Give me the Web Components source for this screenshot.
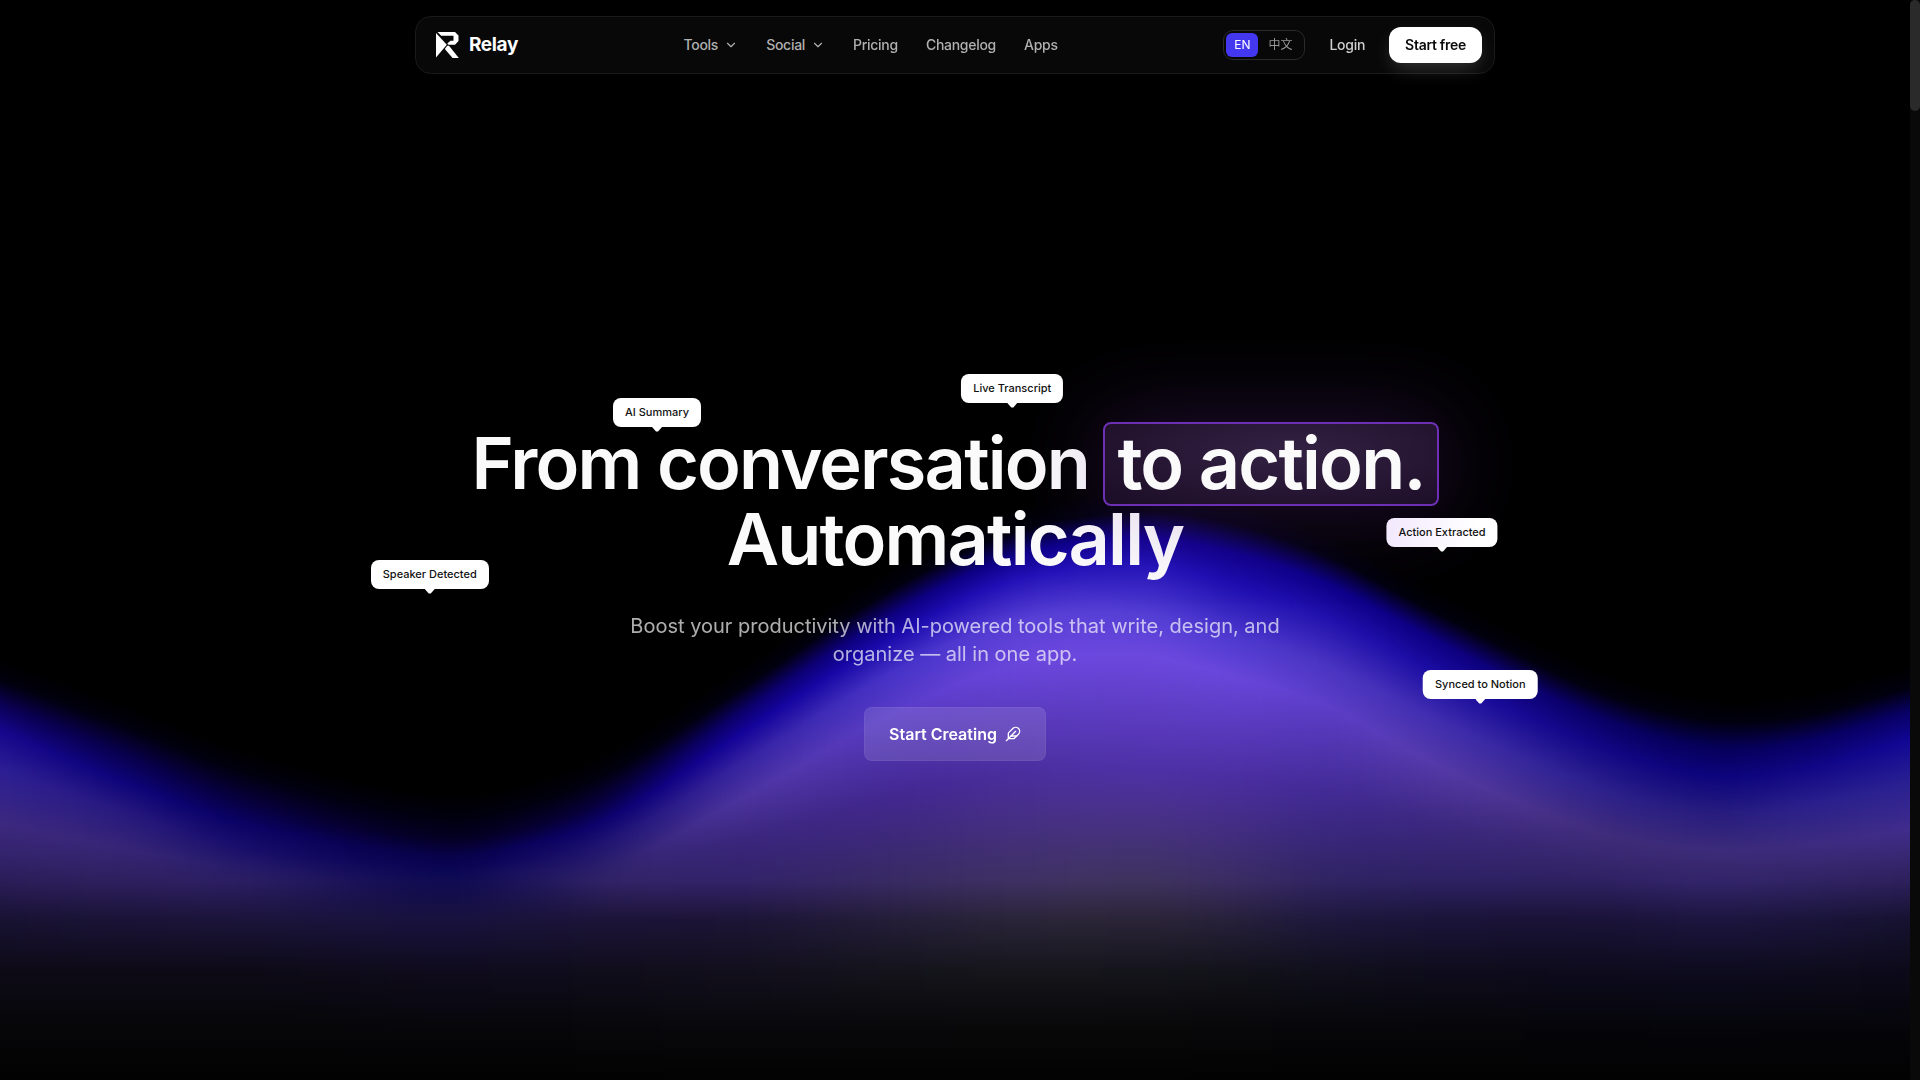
<!DOCTYPE html>
<html lang="en">
<head>
<meta charset="utf-8">
<meta name="viewport" content="width=device-width, initial-scale=1">
<title>Relay</title>
<style>
  html, body { margin: 0; background: #000; }
  body { font-family: Inter, "Noto Sans CJK SC", sans-serif; color: #fafafa; }
</style>
</head>
<body>
<relay-page>
  <relay-header slot="header">
    <relay-logo slot="brand">Relay</relay-logo>
    <nav-item menu>Tools</nav-item>
    <nav-item menu>Social</nav-item>
    <nav-item href="#pricing">Pricing</nav-item>
    <nav-item href="#changelog">Changelog</nav-item>
    <nav-item href="#apps">Apps</nav-item>
    <language-switch slot="actions"></language-switch>
    <nav-item slot="actions" href="#login" bright>Login</nav-item>
    <start-button slot="actions">Start free</start-button>
  </relay-header>
  <relay-hero>
    <span slot="lead">From conversation</span>
    <span slot="mark">to action.</span>
    <span slot="tail">Automatically</span>
    <span slot="text">Boost your productivity with AI-powered tools that write, design, and organize — all in one app.</span>
    <span slot="cta">Start Creating</span>
    <float-tag slot="tags" style="--x:34.4%;--y:398px">AI Summary</float-tag>
    <float-tag slot="tags" style="--x:53%;--y:374px">Live Transcript</float-tag>
    <float-tag slot="tags" style="--x:22.5%;--y:560px">Speaker Detected</float-tag>
    <float-tag slot="tags" tinted style="--x:75.5%;--y:518px">Action Extracted</float-tag>
    <float-tag slot="tags" style="--x:77.5%;--y:670px">Synced to Notion</float-tag>
  </relay-hero>
</relay-page>

<script>
class Base extends HTMLElement {
  constructor() {
    super();
    this.attachShadow({ mode: 'open' }).innerHTML = this.template();
  }
}

customElements.define('relay-page', class extends Base {
  template() { return `<style>
    :host { display: grid; grid-template-columns: 1fr 10px; min-height: 100vh; }
    main { position: relative; display: flex; flex-direction: column; overflow: hidden; }
    .rail { background: #090909; }
    .thumb { height: 111px; border-radius: 5px; background: #2a2a2a; }
    slot[name=header] { display: block; }
    .top { position: absolute; inset: 0 0 auto; z-index: 2; padding: 16px 24px 0; }
  </style>
  <main><div class="top"><slot name="header"></slot></div><slot></slot></main>
  <div class="rail" aria-hidden="true"><div class="thumb"></div></div>`; }
});

customElements.define('relay-header', class extends Base {
  template() { return `<style>
    :host { display: block; max-width: 1080px; margin: 0 auto; }
    header { box-sizing: border-box; height: 58px; padding: 0 12px 0 20px; display: flex; align-items: center;
      justify-content: space-between; border: 1px solid #1a1a1a; border-radius: 16px; background: #080808; }
    nav { display: flex; gap: 28px; }
    .actions { display: flex; align-items: center; gap: 24px; }
  </style>
  <header><slot name="brand"></slot><nav aria-label="Main"><slot></slot></nav>
  <div class="actions"><slot name="actions"></slot></div></header>`; }
});

customElements.define('relay-logo', class extends Base {
  template() { return `<style>
    :host { display: block; }
    a { display: flex; align-items: center; gap: 10px; color: #fff; text-decoration: none; font-size: 19px; font-weight: 700; line-height: 28px; letter-spacing: -0.02em; }
    svg { display: block; }
  </style>
  <a href="#home"><svg width="23" height="26" viewBox="0 0 23 26" fill="#fff" aria-hidden="true">
    <path d="M0 1 10.800 12.800 0 25.500z"/>
    <path d="M1.500 0H19L22.500 3.500V9L19 12.800H12.500L11.300 11.500 14.500 8.800H17.500V3.800H5.200z"/>
    <path d="M11.300 13.800H13L22.800 26H16.600L8.800 17z"/></svg><slot></slot></a>`; }
});

customElements.define('nav-item', class extends Base {
  template() {
    const chevron = `<svg width="14" height="14" viewBox="0 0 24 24" fill="none" stroke="currentColor" stroke-width="2" stroke-linecap="round" stroke-linejoin="round" aria-hidden="true"><path d="m6 9 6 6 6-6"/></svg>`;
    const body = this.hasAttribute('menu')
      ? `<button type="button" aria-haspopup="true"><slot></slot>${chevron}</button>`
      : `<a href="${this.getAttribute('href')}"><slot></slot></a>`;
    return `<style>
      :host { display: block; }
      a, button { display: flex; align-items: center; gap: 6px; margin: 0; padding: 0; border: 0; background: none;
        font: 500 14px/20px Inter, sans-serif; letter-spacing: -0.02em; color: #b0b0b0; text-decoration: none; cursor: pointer; }
      :host([bright]) a { color: #cfcfcf; }
    </style>${body}`;
  }
});

customElements.define('language-switch', class extends Base {
  template() { return `<style>
    :host { display: block; }
    div { display: flex; padding: 2px; border: 1px solid #2a2a2a; border-radius: 10px; }
    button { margin: 0; border: 0; padding: 0 8px; height: 24px; border-radius: 6px; background: none; color: #999;
      font: 400 12px/24px Inter, "Noto Sans CJK SC", sans-serif; }
    button[aria-pressed=true] { background: #4338f0; color: #fff; }
    button + button { padding: 0 10px; }
  </style>
  <div role="group" aria-label="Language"><button type="button" aria-pressed="true">EN</button><button type="button" aria-pressed="false" lang="zh">中文</button></div>`; }
});

customElements.define('start-button', class extends Base {
  template() { return `<style>
    :host { display: block; }
    button { margin: 0; border: 0; height: 36px; padding: 0 16px; border-radius: 12px; background: #fff; color: #0a0a0a;
      font: 600 14px/20px Inter, sans-serif; letter-spacing: -0.02em; box-shadow: 0 8px 20px -4px rgba(255,255,255,.2); }
  </style><button type="button"><slot></slot></button>`; }
});

customElements.define('float-tag', class extends Base {
  template() { return `<style>
    :host { position: absolute; left: var(--x); top: var(--y); transform: translateX(-50%); display: block;
      padding: 6px 12px 7px; border-radius: 8px; background: #fff; color: #111; font-size: 11px; font-weight: 500; line-height: 16px; white-space: nowrap; }
    :host([tinted]) { background: linear-gradient(100deg, #f3e8fd, #fff 80%); }
    :host::after { content: ""; position: absolute; left: 50%; bottom: -5px; width: 10px; height: 5px; margin-left: -5px;
      background: #fff; clip-path: polygon(0 0, 100% 0, 60% 90%, 40% 90%); }
  </style><slot></slot>`; }
});

/* Colour ramps of the wave. Each entry is a column at x; its stops run from the
   dark crest to the purple body as [y, r, g, b]. The floor rows are shared. */
const FLOOR_Y = [881, 920, 972, 1029, 1080];
const WAVE = [
  [0,    [[680,0,0,0],[704,10,0,84],[730,22,6,140],[770,44,30,148],[824,60,40,126]], [[42,29,88],[24,18,50],[13,10,22],[6,6,8],[2,2,2]]],
  [120,  [[724,0,0,0],[752,8,0,76],[780,14,4,122],[810,38,24,126],[848,54,37,118]], [[45,31,94],[26,19,54],[13,10,22],[6,6,8],[2,2,2]]],
  [245,  [[772,0,0,0],[800,6,0,60],[824,11,2,100],[848,24,14,106],[868,38,26,104]], [[42,29,98],[27,20,58],[13,10,22],[6,6,8],[2,2,2]]],
  [440,  [[816,0,0,0],[838,4,0,36],[856,8,2,74],[866,10,4,82],[874,13,8,84]], [[16,11,82],[24,18,62],[15,11,28],[6,6,9],[2,2,2]]],
  [530,  [[803,0,0,0],[827,5,0,48],[844,10,2,92],[858,18,9,96],[870,27,18,97]], [[30,21,92],[26,19,58],[15,12,28],[6,6,9],[2,2,2]]],
  [612,  [[770,0,0,0],[796,7,0,66],[816,13,2,112],[838,32,20,116],[864,46,32,110]], [[48,34,102],[28,20,56],[16,13,27],[7,7,10],[2,2,2]]],
  [735,  [[692,0,0,0],[716,11,0,104],[737,20,3,152],[767,52,34,158],[802,74,50,156]], [[50,34,104],[28,21,54],[18,15,28],[8,8,11],[2,2,2]]],
  [900,  [[584,0,0,0],[610,14,0,128],[632,26,10,172],[668,70,50,200],[710,90,60,200]], [[56,42,98],[36,30,56],[20,19,27],[8,8,10],[2,2,2]]],
  [1020, [[530,0,0,0],[554,14,0,136],[578,34,16,182],[620,86,62,212],[664,106,70,220]], [[62,48,98],[41,36,56],[21,21,27],[8,8,9],[2,2,2]]],
  [1140, [[512,0,0,0],[537,15,0,136],[564,34,18,182],[614,84,62,212],[656,108,72,222]], [[62,50,94],[42,36,55],[20,20,27],[8,8,9],[2,2,2]]],
  [1230, [[523,0,0,0],[552,14,0,136],[583,30,14,176],[634,76,56,206],[676,104,70,218]], [[58,44,98],[38,32,58],[18,18,26],[7,7,9],[2,2,2]]],
  [1327, [[556,0,0,0],[584,14,0,136],[617,32,16,172],[666,74,52,194],[706,92,62,200]], [[48,36,98],[30,24,60],[16,15,27],[6,6,9],[2,2,2]]],
  [1450, [[620,0,0,0],[648,14,0,128],[680,26,12,160],[726,62,44,172],[772,82,56,164]], [[45,33,98],[26,20,56],[14,12,27],[6,6,9],[2,2,2]]],
  [1600, [[692,0,0,0],[718,9,0,100],[746,18,6,132],[788,44,32,140],[832,64,44,124]], [[46,33,98],[26,19,56],[13,11,28],[5,5,9],[2,2,2]]],
  [1710, [[720,0,0,0],[747,6,0,90],[775,12,4,124],[811,38,27,126],[850,60,43,122]], [[50,36,106],[28,21,62],[13,11,30],[5,5,10],[2,2,2]]],
  [1800, [[716,0,0,0],[743,8,0,100],[769,16,6,132],[806,42,31,138],[846,60,43,126]], [[48,35,100],[26,20,58],[13,11,28],[5,5,9],[2,2,2]]],
  [1910, [[687,0,0,0],[711,8,0,100],[739,16,6,148],[783,42,32,146],[830,64,44,140]], [[45,32,92],[22,18,48],[12,10,25],[5,5,9],[2,2,2]]]
];
/* Colours of the body midway between the purple band and the floor. */
const BODY = [[0,52,35,110],[120,50,34,106],[245,40,28,101],[440,15,10,83],[612,48,34,108],[735,58,38,124],[900,66,40,144],[1020,74,46,158],[1140,78,48,166],[1230,74,46,160],[1327,66,42,148],[1450,60,40,126],[1600,56,39,112],[1910,56,39,114]];

function spline(xs, vs, x) {
  let i = 0;
  while (i < xs.length - 2 && x > xs[i + 1]) i++;
  const slope = k => {
    const a = Math.max(0, k - 1), b = Math.min(xs.length - 1, k + 1);
    return (vs[b] - vs[a]) / (xs[b] - xs[a]);
  };
  const h = xs[i + 1] - xs[i], t = (x - xs[i]) / h, t2 = t * t, t3 = t2 * t;
  return (2*t3 - 3*t2 + 1) * vs[i] + (t3 - 2*t2 + t) * h * slope(i) + (3*t2 - 2*t3) * vs[i+1] + (t3 - t2) * h * slope(i + 1);
}

customElements.define('wave-backdrop', class extends Base {
  template() { return `<style>
    :host { display: block; }
    canvas { display: block; width: 100%; height: 100%; }
  </style><canvas width="1910" height="1080" aria-hidden="true"></canvas>`; }
  connectedCallback() {
    const c = this.shadowRoot.querySelector('canvas').getContext('2d');
    const H = 1080, xs = WAVE.map(w => w[0]), bx = BODY.map(b => b[0]);
    const rows = WAVE.map(w => {
      const flat = [];
      w[1].forEach(s => flat.push(...s));
      w[2].forEach(s => flat.push(...s));
      return flat;
    });
    const tracks = rows[0].map((_, k) => rows.map(r => r[k]));
    const body = [1, 2, 3].map(k => BODY.map(b => b[k]));
    for (let x = 0; x < 1910; x++) {
      const v = tracks.map(t => spline(xs, t, x));
      const g = c.createLinearGradient(0, 0, 0, H);
      const stop = (y, r, gr, b) => g.addColorStop(Math.min(1, y / H), `rgb(${Math.max(0, r)} ${Math.max(0, gr)} ${Math.max(0, b)})`);
      stop(v[0] - 22, 0, 0, 0);
      stop(v[0], 1, 0, 14);
      for (let k = 1; k < 5; k++) stop(Math.min(v[4*k], 876), v[4*k+1], v[4*k+2], v[4*k+3]);
      const m = body.map(t => spline(bx, t, x));
      if (v[16] < 860) stop((v[16] + FLOOR_Y[0]) / 2, ...m);
      FLOOR_Y.forEach((y, k) => stop(y, v[20+3*k], v[21+3*k], v[22+3*k]));
      c.fillStyle = g;
      c.fillRect(x, 0, 1, H);
    }
  }
});

customElements.define('relay-hero', class extends Base {
  template() { return `<style>
    :host { position: relative; flex: 1; display: flex; flex-direction: column; align-items: center; justify-content: center; padding: 106px 24px 0; text-align: center; }
    wave-backdrop { position: absolute; inset: 0; }
    .copy { position: relative; display: flex; flex-direction: column; align-items: center; }
    h1 { margin: 0 0 35px; max-width: 1024px; font-size: 72px; font-weight: 600; line-height: 76px; letter-spacing: -0.025em; color: #fafafa; }
    .mark { position: relative; display: inline-block; box-sizing: border-box; margin: -4px 0 -5px -2px; padding: 1px 12px 3px; border: 2px solid #6d2fb4; border-radius: 8px;
      background: radial-gradient(ellipse at 55% 35%, rgba(64,42,84,.8), rgba(36,16,50,.75));
      box-shadow: 0 0 90px 4px rgba(120,50,180,.28); }
    p { margin: 0 0 39px; max-width: 672px; font-size: 20px; line-height: 28px; color: rgba(255,255,255,.68); }
    button { display: flex; align-items: center; gap: 8px; height: 54px; padding: 0 24px; border: 1px solid rgba(255,255,255,.05); border-radius: 8px;
      background: rgba(255,255,255,.12); color: #fff; font: 600 16px/24px Inter, sans-serif; }
  </style>
  <wave-backdrop></wave-backdrop>
  <div class="copy">
    <h1><slot name="lead"></slot> <span class="mark"><slot name="mark"></slot></span><br><slot name="tail"></slot></h1>
    <p><slot name="text"></slot></p>
    <button type="button"><slot name="cta"></slot>
      <svg width="16" height="16" viewBox="0 0 24 24" fill="none" stroke="currentColor" stroke-width="2" stroke-linecap="round" stroke-linejoin="round" aria-hidden="true">
        <path d="M12.670 19a2 2 0 0 0 1.416-.588l6.154-6.172a6 6 0 0 0-8.490-8.490L5.586 9.914A2 2 0 0 0 5 11.328V18a1 1 0 0 0 1 1z"/><path d="M16 8 2 22"/><path d="M17.500 15H9"/></svg>
    </button>
  </div>
  <slot name="tags"></slot>`; }
});
</script>
</body>
</html>
